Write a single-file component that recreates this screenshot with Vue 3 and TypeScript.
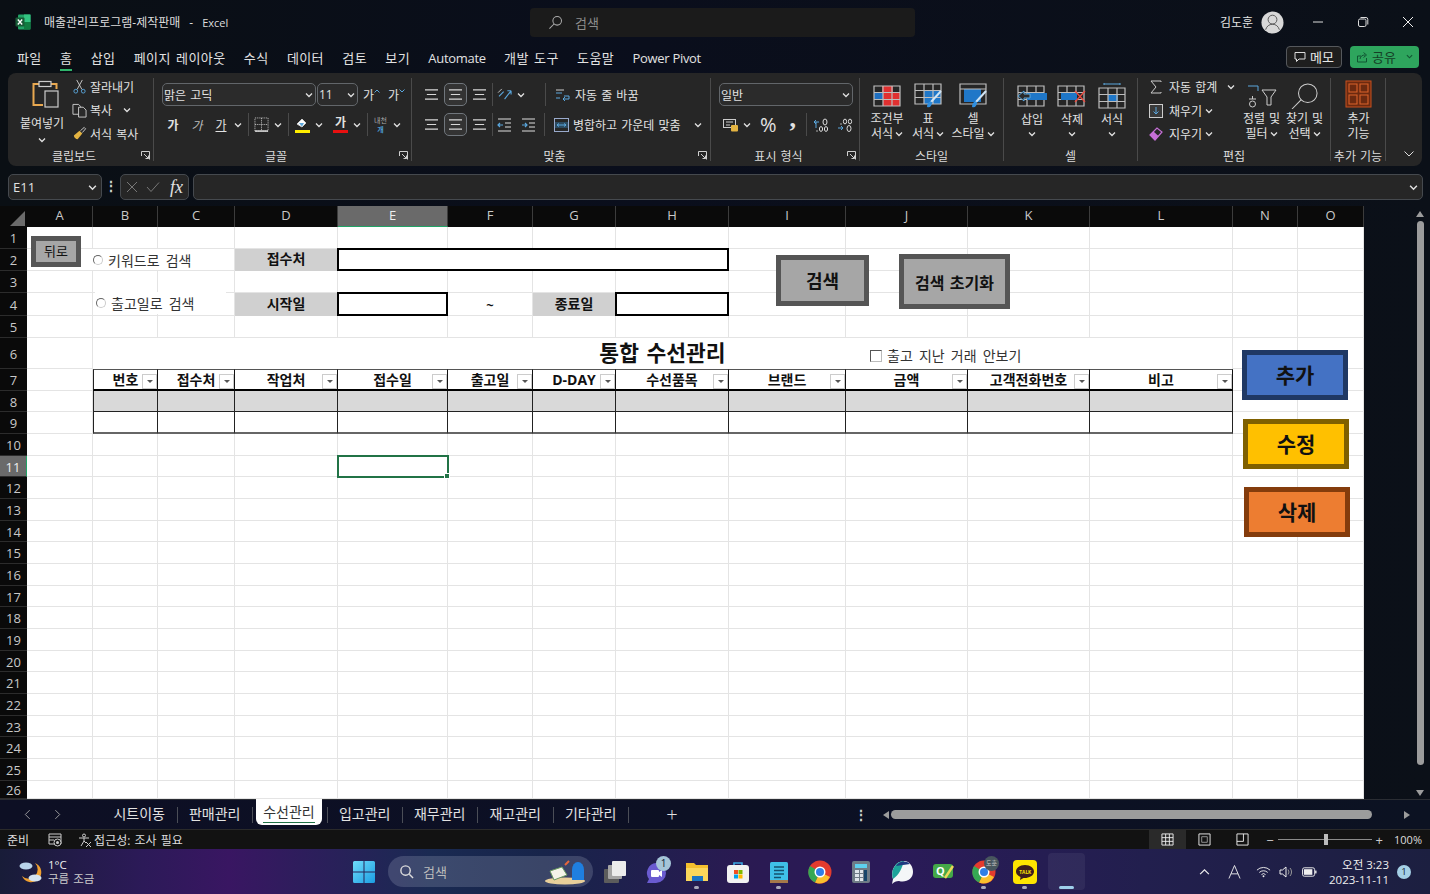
<script setup lang="ts">
import { computed } from 'vue'

interface Cell {
  key: string
  text: string
  cls: string[]
  span: number
  filter: boolean
}

// 열 머리글과 오른쪽 끝 좌표
const cols = ['A', 'B', 'C', 'D', 'E', 'F', 'G', 'H', 'I', 'J', 'K', 'L', 'N', 'O']
const colEdges = [27, 93, 158, 235, 338, 448, 533, 616, 729, 846, 968, 1090, 1233, 1298, 1364]
const rowEdges = [
  206, 227, 249, 271, 293, 316, 338, 369, 391, 412, 434, 456, 477, 499, 521, 542, 564, 586, 607, 629, 651, 672, 694,
  716, 737, 759, 781, 799
]

const gridStyle = computed(() => ({
  gridTemplateColumns: colEdges.map((e, i) => `${e - (i ? colEdges[i - 1] : 0)}px`).join(' '),
  gridTemplateRows: rowEdges.slice(1).map((e, i) => `${e - rowEdges[i]}px`).join(' ')
}))

const headers: Record<string, string> = {
  B: '번호',
  C: '접수처',
  D: '작업처',
  E: '접수일',
  F: '출고일',
  G: 'D-DAY',
  H: '수선품목',
  I: '브랜드',
  J: '금액',
  K: '고객전화번호',
  L: '비고'
}
const fixed: Record<string, { text: string; cls: string; span?: number }> = {
  D2: { text: '접수처', cls: 'label' },
  E2: { text: '', cls: 'box', span: 4 },
  D4: { text: '시작일', cls: 'label' },
  E4: { text: '', cls: 'box' },
  F4: { text: '~', cls: 'tilde' },
  G4: { text: '종료일', cls: 'label' },
  H4: { text: '', cls: 'box' },
  B6: { text: '통합 수선관리', cls: 'title', span: 11 },
  E11: { text: '', cls: 'cur' }
}

const cells = computed(() => {
  const out: Cell[] = []
  for (let r = 1; r <= 26; r++) {
    let skip = 0
    cols.forEach((c) => {
      if (skip > 0) {
        skip--
        return
      }
      const id = `${c}${r}`
      const f = fixed[id]
      const cls: string[] = []
      const inTable = c in headers
      if (inTable && r === 7) cls.push('th')
      if (inTable && r === 8) cls.push('gray')
      if (inTable && r === 9) cls.push('last')
      if (inTable && r >= 7 && r <= 9 && c === 'B') cls.push('first')
      if (f) cls.push(f.cls)
      const span = f?.span ?? 1
      skip = span - 1
      out.push({
        key: id,
        text: f?.text ?? (inTable && r === 7 ? headers[c] : ''),
        cls,
        span,
        filter: inTable && r === 7
      })
    })
  }
  return out
})

const rows = Array.from({ length: 26 }, (_, i) => i + 1)
const menus = ['파일', '홈', '삽입', '페이지 레이아웃', '수식', '데이터', '검토', '보기', 'Automate', '개발 도구', '도움말', 'Power Pivot']
const latinMenus = ['Automate', 'Power Pivot']
const tabs = ['시트이동', '판매관리', '수선관리', '입고관리', '재무관리', '재고관리', '기타관리']
</script>

<template>
  <div class="app">
    <svg width="0" height="0" class="defs">
      <symbol id="chev" viewBox="0 0 8 8"><path d="M1 2.5 4 5.5 7 2.5" fill="none" stroke="#e0e0e0" stroke-width="1.3" /></symbol>
      <symbol id="launch" viewBox="0 0 9 9">
        <path d="M.5 .5H8.5V8.5M.5 .5V5M3 3 7.5 7.5M7.5 4.5V7.5H4.5" fill="none" stroke="#cfcfcf" stroke-width="1" />
      </symbol>
      <symbol id="lines" viewBox="0 0 16 14">
        <path d="M1 2H15M3 7H13M1 12H15" fill="none" stroke="#d8d8d8" stroke-width="1.3" />
      </symbol>
      <symbol id="grid3" viewBox="0 0 28 22">
        <path d="M1 1H27V21H1ZM1 7.5H27M1 14.5H27M10 1V21M19 1V21" fill="none" stroke="#bdbdbd" stroke-width="1.2" />
      </symbol>
    </svg>

    <!-- 제목 표시줄 -->
    <header class="titlebar">
      <div class="title-left">
        <svg class="xl" viewBox="0 0 16 16" width="16" height="16">
          <rect x="3" y=".5" width="12.5" height="15" rx="1" fill="#21a366" />
          <rect x="9" y=".5" width="6.5" height="7.5" fill="#33c481" />
          <rect x="9" y="8" width="6.5" height="7.5" fill="#107c41" />
          <rect x=".5" y="3.5" width="9" height="9" rx="1" fill="#185c37" />
          <path d="M2.8 5.5 7.2 10.5M7.2 5.5 2.8 10.5" stroke="#fff" stroke-width="1.3" />
        </svg>
        <span>매출관리프로그램-제작판매</span>
        <span class="dash">-</span>
        <span class="excel">Excel</span>
      </div>
      <div class="search">
        <svg viewBox="0 0 16 16" width="15" height="15"><circle cx="9.8" cy="6.2" r="4.6" fill="none" stroke="#aaa" stroke-width="1.1" /><path d="M6.4 9.6 1.5 14.5" stroke="#aaa" stroke-width="1.1" /></svg>
        <span>검색</span>
      </div>
      <div class="title-right">
        <span class="user">김도훈</span>
        <svg class="avatar" viewBox="0 0 24 24" width="23" height="23">
          <circle cx="12" cy="12" r="11.5" fill="#d8d8d8" />
          <circle cx="12" cy="9" r="4.6" fill="none" stroke="#555" stroke-width="1" />
          <path d="M4.8 19.5C6 15.8 8.6 13.8 12 13.8S18 15.8 19.2 19.5" fill="none" stroke="#555" stroke-width="1" />
        </svg>
        <div class="winbtns">
          <svg viewBox="0 0 12 12" width="12" height="12"><path d="M1 6H11" stroke="#ddd" stroke-width="1" /></svg>
          <svg viewBox="0 0 12 12" width="12" height="12"><rect x="1.5" y="3" width="7.5" height="7.5" rx="1.5" fill="none" stroke="#ddd" /><path d="M3.5 1.5H9A1.8 1.8 0 0 1 10.8 3.3V8.5" fill="none" stroke="#ddd" /></svg>
          <svg viewBox="0 0 12 12" width="12" height="12"><path d="M1 1 11 11M11 1 1 11" stroke="#eee" stroke-width="1" /></svg>
        </div>
      </div>
    </header>

    <!-- 메뉴 탭 -->
    <nav class="menubar">
      <span v-for="m in menus" :key="m" class="menu" :class="{ on: m === '홈', latin: latinMenus.includes(m) }">{{ m }}</span>
      <div class="menu-right">
        <button class="memo">
          <svg viewBox="0 0 12 12" width="12" height="12"><path d="M1 1.5H11V8H5L2.5 10.5V8H1Z" fill="none" stroke="#ddd" /></svg>
          메모
        </button>
        <button class="share">
          <svg viewBox="0 0 12 12" width="12" height="12"><path d="M1.5 5V11H10.5V7M1.5 5 5 5M4 8C4.5 5 6.5 4 9 4M7.5 1.5 10.5 4 7.5 6.5" fill="none" stroke="#153" stroke-width="1" /></svg>
          <span>공유</span>
          <svg class="sc" viewBox="0 0 8 8" width="7" height="7"><path d="M1 2.5 4 5.5 7 2.5" fill="none" stroke="#153" stroke-width="1.3" /></svg>
        </button>
      </div>
    </nav>

    <!-- 리본 -->
    <section class="ribbon">
      <div class="group g-clip">
        <div class="body clip-body">
          <div class="paste">
            <svg class="paste-ic" viewBox="0 0 28 30" width="28" height="30">
              <path d="M7 4H1.5V25H11" fill="none" stroke="#e8a850" stroke-width="2" />
              <path d="M19 4H24.5V9" fill="none" stroke="#e8a850" stroke-width="2" />
              <rect x="7" y="1.5" width="12" height="5" fill="none" stroke="#ccc" stroke-width="1.2" />
              <rect x="13" y="11" width="13" height="16" fill="#2c2c2c" stroke="#ccc" stroke-width="1.2" />
            </svg>
            <span>붙여넣기</span>
            <svg class="ch" width="8" height="8"><use href="#chev" /></svg>
          </div>
          <div class="clip-list">
            <div class="small">
              <svg viewBox="0 0 16 16" width="15" height="15"><path d="M5 1 10.5 11M11 1 5.5 11" stroke="#ccc" fill="none" /><circle cx="4" cy="13" r="2" fill="none" stroke="#5aa6dc" /><circle cx="12" cy="13" r="2" fill="none" stroke="#5aa6dc" /></svg>
              <span>잘라내기</span>
            </div>
            <div class="small">
              <svg viewBox="0 0 16 16" width="15" height="15"><path d="M1 1.5H7L9 3.5V12H1Z" fill="none" stroke="#ccc" /><path d="M7 4.5H12L15 7.5V15H7Z" fill="#2a2a2a" stroke="#ccc" /></svg>
              <span>복사</span>
              <svg class="ch gap" width="8" height="8"><use href="#chev" /></svg>
            </div>
            <div class="small">
              <svg viewBox="0 0 16 16" width="15" height="15"><path d="M2 10 8 5 11 8 6 14C4 14 2 12 2 10Z" fill="#e3b341" /><path d="M9 5 13 1.5 14.5 3 11 7" fill="none" stroke="#ccc" /></svg>
              <span>서식 복사</span>
            </div>
          </div>
        </div>
        <div class="glabel shifted">클립보드</div>
        <svg class="launcher" width="9" height="9"><use href="#launch" /></svg>
      </div>

      <div class="group g-font">
        <div class="body">
          <div class="frow">
            <div class="select font-name"><span>맑은 고딕</span><svg width="8" height="8"><use href="#chev" /></svg></div>
            <div class="select font-size"><span>11</span><svg width="8" height="8"><use href="#chev" /></svg></div>
            <span class="grow">가<svg viewBox="0 0 6 4" width="6" height="4"><path d="M.5 3.5 3 1 5.5 3.5" fill="none" stroke="#5aa6dc" /></svg></span>
            <span class="grow">가<svg viewBox="0 0 6 4" width="6" height="4"><path d="M.5 .5 3 3 5.5 .5" fill="none" stroke="#5aa6dc" /></svg></span>
          </div>
          <div class="frow second">
            <b class="fb">가</b>
            <i class="fb it">가</i>
            <u class="fb">가</u>
            <svg class="ch c0" width="8" height="8"><use href="#chev" /></svg>
            <span class="sep"></span>
            <svg viewBox="0 0 16 16" width="15" height="15"><path d="M1 1H15V15H1ZM8 1V15M1 8H15" fill="none" stroke="#ccc" stroke-dasharray="1 1" /><path d="M1 15H15" stroke="#eee" stroke-width="1.4" /></svg>
            <svg class="ch" width="8" height="8"><use href="#chev" /></svg>
            <span class="sep"></span>
            <span class="colored">
              <svg viewBox="0 0 16 12" width="16" height="12"><path d="M3 7 8 2 12 6 8 10Z" fill="#fff" stroke="#ccc" /><path d="M5 6 10 6 8 9.5Z" fill="#5aa6dc" /></svg>
              <em class="yl"></em>
            </span>
            <svg class="ch" width="8" height="8"><use href="#chev" /></svg>
            <span class="colored txt">가<em class="rd"></em></span>
            <svg class="ch" width="8" height="8"><use href="#chev" /></svg>
            <span class="sep"></span>
            <span class="ruby">내천<br /><b>개</b></span>
            <svg class="ch" width="8" height="8"><use href="#chev" /></svg>
          </div>
        </div>
        <div class="glabel shifted">글꼴</div>
        <svg class="launcher" width="9" height="9"><use href="#launch" /></svg>
      </div>

      <div class="group g-align">
        <div class="body">
          <div class="frow">
            <span class="aic"><svg width="15" height="13"><use href="#lines" /></svg></span>
            <span class="aic sel"><svg width="15" height="13"><use href="#lines" /></svg></span>
            <span class="aic"><svg width="15" height="13"><use href="#lines" /></svg></span>
            <span class="sep"></span>
            <svg class="orient" viewBox="0 0 18 14" width="17" height="13"><path d="M2 9 7 4M8 12 15 3M15 3H11M15 3V7" fill="none" stroke="#5aa6dc" stroke-width="1.2" /><path d="M1 5 5 1" stroke="#ccc" /></svg>
            <svg class="ch" width="8" height="8"><use href="#chev" /></svg>
            <span class="sep s2"></span>
            <div class="wide">
              <svg viewBox="0 0 16 14" width="16" height="14"><path d="M1 5H7M1 10H5M9 8H14V11H8M10 9 8 11 10 13" fill="none" stroke="#5aa6dc" /><path d="M1 2H9" stroke="#ccc" /></svg>
              <span>자동 줄 바꿈</span>
            </div>
          </div>
          <div class="frow second">
            <span class="aic"><svg width="15" height="13"><use href="#lines" /></svg></span>
            <span class="aic sel"><svg width="15" height="13"><use href="#lines" /></svg></span>
            <span class="aic"><svg width="15" height="13"><use href="#lines" /></svg></span>
            <span class="sep"></span>
            <svg class="ind" viewBox="0 0 15 14" width="15" height="14"><path d="M1 1H14M8 5H14M8 9H14M1 13H14" stroke="#ddd" stroke-width="1.2" /><path d="M1 7H6M3 5 1 7 3 9" fill="none" stroke="#5aa6dc" stroke-width="1.2" /></svg>
            <svg class="ind ind2" viewBox="0 0 15 14" width="15" height="14"><path d="M1 1H14M8 5H14M8 9H14M1 13H14" stroke="#ddd" stroke-width="1.2" /><path d="M1 7H6M4 5 6 7 4 9" fill="none" stroke="#5aa6dc" stroke-width="1.2" /></svg>
            <span class="sep s3"></span>
            <div class="wide">
              <svg viewBox="0 0 15 14" width="15" height="14"><rect x=".5" y=".5" width="14" height="13" fill="none" stroke="#9ac" /><rect x="1" y="4" width="13" height="6" fill="#2b4a60" /><path d="M3 7H12M3 7 5 5.5M3 7 5 8.5M12 7 10 5.5M12 7 10 8.5" fill="none" stroke="#5aa6dc" /></svg>
              <span>병합하고 가운데 맞춤</span>
              <svg class="ch merge-ch" width="8" height="8"><use href="#chev" /></svg>
            </div>
          </div>
        </div>
        <div class="glabel shifted">맞춤</div>
        <svg class="launcher" width="9" height="9"><use href="#launch" /></svg>
      </div>

      <div class="group g-num">
        <div class="body">
          <div class="frow">
            <div class="select num-sel"><span>일반</span><svg width="8" height="8"><use href="#chev" /></svg></div>
          </div>
          <div class="frow second">
            <svg viewBox="0 0 16 14" width="16" height="14"><rect x=".5" y="1.5" width="12" height="8" fill="none" stroke="#ccc" /><path d="M3 4H10M3 7H7" stroke="#ccc" /><rect x="8" y="7" width="7" height="6.5" rx="1" fill="#e3b341" /></svg>
            <svg class="ch" width="8" height="8"><use href="#chev" /></svg>
            <span class="pct">%</span>
            <span class="comma">,</span>
            <span class="sep"></span>
            <svg viewBox="0 0 16 14" width="16" height="14"><path d="M1 4H6M3 2 1 4 3 6M3 4V10" fill="none" stroke="#5aa6dc" /><ellipse cx="12" cy="4" rx="2" ry="3" fill="none" stroke="#ddd" /><circle cx="4" cy="13" r=".7" fill="#ddd" /><ellipse cx="8" cy="11" rx="1.6" ry="2.4" fill="none" stroke="#ddd" /><ellipse cx="13" cy="11" rx="1.6" ry="2.4" fill="none" stroke="#ddd" /></svg>
            <svg class="last-ic" viewBox="0 0 16 14" width="16" height="14"><path d="M1 10H6M4 8 6 10 4 12" fill="none" stroke="#5aa6dc" /><circle cx="4" cy="6" r=".7" fill="#ddd" /><ellipse cx="8" cy="3.5" rx="1.6" ry="2.4" fill="none" stroke="#ddd" /><ellipse cx="13" cy="3.5" rx="1.6" ry="2.4" fill="none" stroke="#ddd" /><ellipse cx="12" cy="10.5" rx="2" ry="3" fill="none" stroke="#ddd" /></svg>
          </div>
        </div>
        <div class="glabel shifted">표시 형식</div>
        <svg class="launcher" width="9" height="9"><use href="#launch" /></svg>
      </div>

      <div class="group g-style">
        <div class="body bigs">
          <div class="big b1">
            <svg viewBox="0 0 28 22" width="28" height="22"><rect x="9" y="1" width="11" height="6" fill="#e03030" /><rect x="1" y="7" width="9" height="7" fill="#1f6fc0" /><rect x="10" y="7" width="17" height="7" fill="#e03030" /><rect x="10" y="14" width="17" height="7" fill="#e03030" /><use href="#grid3" width="28" height="22" /></svg>
            <span>조건부</span>
            <span>서식<svg class="ch" width="8" height="8"><use href="#chev" /></svg></span>
          </div>
          <div class="big b2">
            <svg viewBox="0 0 28 26" width="28" height="26"><rect x="10" y="8" width="17" height="13" fill="#1f77c8" /><use href="#grid3" width="28" height="22" /><path d="M27 8 17 19" stroke="#cfe4f5" stroke-width="2" /><path d="M13 24C13 20 15 18 18 19 18 23 16 25 13 24Z" fill="#2f8fe0" /></svg>
            <span>표</span>
            <span>서식<svg class="ch" width="8" height="8"><use href="#chev" /></svg></span>
          </div>
          <div class="big b3">
            <svg viewBox="0 0 28 26" width="28" height="26"><rect x="5" y="6" width="17" height="13" fill="#1f77c8" /><path d="M1 1H27V21H1ZM1 6H27" fill="none" stroke="#bdbdbd" stroke-width="1.2" /><path d="M27 8 17 19" stroke="#cfe4f5" stroke-width="2" /><path d="M13 24C13 20 15 18 18 19 18 23 16 25 13 24Z" fill="#2f8fe0" /></svg>
            <span>셀</span>
            <span>스타일<svg class="ch" width="8" height="8"><use href="#chev" /></svg></span>
          </div>
        </div>
        <div class="glabel">스타일</div>
      </div>

      <div class="group g-cells">
        <div class="body bigs">
          <div class="big cell-btn">
            <svg viewBox="0 0 30 22" width="30" height="22"><use href="#grid3" width="28" height="22" /><rect x="10" y="8" width="20" height="7" fill="#1f77c8" /><path d="M1 11 7 6V9H13V13H7V16Z" fill="#2a2a2a" stroke="#5aa6dc" /></svg>
            <span>삽입</span>
            <svg class="ch" width="8" height="8"><use href="#chev" /></svg>
          </div>
          <div class="big cell-btn">
            <svg viewBox="0 0 30 22" width="30" height="22"><use href="#grid3" width="28" height="22" /><rect x="4" y="8" width="16" height="7" fill="#1f77c8" /><path d="M18 6 28 17M28 6 18 17" stroke="#e84a3f" stroke-width="1.4" /></svg>
            <span>삭제</span>
            <svg class="ch" width="8" height="8"><use href="#chev" /></svg>
          </div>
          <div class="big cell-btn">
            <svg viewBox="0 0 28 26" width="28" height="26"><path d="M6 1H22M6 0V2M22 0V2" stroke="#5aa6dc" /><g transform="translate(0 4)"><rect x="10" y="7" width="10" height="7" fill="#1f77c8" /><use href="#grid3" width="28" height="22" /></g></svg>
            <span>서식</span>
            <svg class="ch" width="8" height="8"><use href="#chev" /></svg>
          </div>
        </div>
        <div class="glabel">셀</div>
      </div>

      <div class="group g-edit">
        <div class="body edit-body">
          <div class="edit-list">
            <div class="small">
              <svg viewBox="0 0 14 14" width="14" height="14"><path d="M12 2V1H2L7 7 2 13H12V12" fill="none" stroke="#ccc" /></svg>
              <span>자동 합계</span>
              <svg class="ch sum-ch" width="8" height="8"><use href="#chev" /></svg>
            </div>
            <div class="small">
              <svg viewBox="0 0 14 14" width="14" height="14"><rect x=".5" y=".5" width="13" height="13" fill="#3a3a3a" stroke="#ccc" /><path d="M7 3V10M4.5 7.5 7 10 9.5 7.5" fill="none" stroke="#5aa6dc" /></svg>
              <span>채우기</span>
              <svg class="ch" width="8" height="8"><use href="#chev" /></svg>
            </div>
            <div class="small">
              <svg viewBox="0 0 14 14" width="14" height="14"><path d="M1 8 8 1 13 5 6 13Z" fill="none" stroke="#c56fd6" stroke-width="1.2" /><path d="M1 8 4.5 4.5 9.5 9 6 13Z" fill="#c56fd6" /></svg>
              <span>지우기</span>
              <svg class="ch" width="8" height="8"><use href="#chev" /></svg>
            </div>
          </div>
          <div class="big sort">
            <svg viewBox="0 0 30 24" width="30" height="24"><path d="M1 2H11V7" fill="none" stroke="#5aa6dc" /><path d="M15 6H29L24 13V21H20V13Z" fill="none" stroke="#ccc" /><path d="M2 15H9M5.5 12V15M2.5 20A3 3 0 0 0 8.5 20 3 3 0 0 0 2.5 20" fill="none" stroke="#ccc" /></svg>
            <span>정렬 및</span>
            <span>필터<svg class="ch" width="8" height="8"><use href="#chev" /></svg></span>
          </div>
          <div class="big find">
            <svg viewBox="0 0 30 28" width="30" height="28"><circle cx="18" cy="11" r="10" fill="none" stroke="#ccc" stroke-width="1.1" /><path d="M11 18 1 28" stroke="#ccc" stroke-width="1.1" /></svg>
            <span>찾기 및</span>
            <span>선택<svg class="ch" width="8" height="8"><use href="#chev" /></svg></span>
          </div>
        </div>
        <div class="glabel">편집</div>
      </div>

      <div class="group g-add">
        <div class="body bigs">
          <div class="big add">
            <svg viewBox="0 0 27 28" width="27" height="28"><rect x="1" y="1" width="25" height="26" fill="#6c2a10" stroke="#c8501e" /><path d="M4 4H12V12H4ZM15 4H23V12H15ZM4 15H12V24H4ZM15 15H23V24H15Z" fill="none" stroke="#d9622b" stroke-width="1.1" /></svg>
            <span>추가</span>
            <span>기능</span>
          </div>
        </div>
        <div class="glabel">추가 기능</div>
      </div>

      <svg class="collapse" viewBox="0 0 10 6" width="10" height="6"><path d="M.5 .5 5 5 9.5 .5" fill="none" stroke="#ddd" /></svg>
    </section>

    <!-- 수식 입력줄 -->
    <section class="formula">
      <div class="fbox namebox"><span>E11</span><svg width="9" height="9"><use href="#chev" /></svg></div>
      <span class="vdots">⋮</span>
      <div class="fbox fxbox">
        <svg viewBox="0 0 12 12" width="12" height="12"><path d="M1 1 11 11M11 1 1 11" stroke="#777" /></svg>
        <svg viewBox="0 0 14 12" width="14" height="12"><path d="M1 6 5 10.5 13 1.5" fill="none" stroke="#777" /></svg>
        <i class="fx">fx</i>
      </div>
      <div class="fbox input"><svg width="9" height="9"><use href="#chev" /></svg></div>
    </section>

    <!-- 시트 -->
    <main class="main">
      <div class="sheet">
        <div class="grid" :style="gridStyle">
          <div class="corner"><i></i></div>
          <div v-for="c in cols" :key="c" class="ch-cell" :class="{ sel: c === 'E' }">{{ c }}</div>
          <template v-for="r in rows" :key="r">
            <div class="rh" :class="{ sel: r === 11 }" :style="{ gridRow: r + 1, gridColumn: 1 }">{{ r }}</div>
          </template>
          <div
            v-for="cell in cells"
            :key="cell.key"
            class="cell"
            :class="cell.cls"
            :style="{
              gridRow: Number(cell.key.slice(1)) + 1,
              gridColumn: `${cols.indexOf(cell.key[0]) + 2} / span ${cell.span}`
            }"
          >
            {{ cell.text }}
            <span v-if="cell.filter" class="filter"><i></i></span>
          </div>
        </div>

        <!-- 시트 위 도형과 컨트롤 -->
        <div class="shape back">뒤로</div>
        <div class="shape find-btn">검색</div>
        <div class="shape reset-btn">검색 초기화</div>
        <div class="shape add-btn">추가</div>
        <div class="shape edit-btn">수정</div>
        <div class="shape del-btn">삭제</div>
        <label class="ctl radio r1"><i></i>키워드로 검색</label>
        <label class="ctl radio r2"><i></i>출고일로 검색</label>
        <label class="ctl check"><i></i>출고 지난 거래 안보기</label>
      </div>
      <div class="vscroll">
        <i class="tri-up"></i>
        <div class="vthumb"></div>
        <i class="tri-down"></i>
      </div>
    </main>

    <!-- 시트 탭 -->
    <section class="tabbar">
      <div class="tabnav">
        <svg viewBox="0 0 8 12" width="7" height="11"><path d="M6.5 1 1.5 6 6.5 11" fill="none" stroke="#aaa" /></svg>
        <svg viewBox="0 0 8 12" width="7" height="11"><path d="M1.5 1 6.5 6 1.5 11" fill="none" stroke="#aaa" /></svg>
      </div>
      <div v-for="t in tabs" :key="t" class="tab" :class="{ on: t === '수선관리' }">
        <span>{{ t }}</span>
      </div>
      <span class="plus">+</span>
      <span class="hdots">⋮</span>
      <div class="hscroll">
        <i class="tri-left"></i>
        <div class="hthumb"></div>
        <i class="tri-right"></i>
      </div>
    </section>

    <!-- 상태 표시줄 -->
    <footer class="status">
      <span class="ready">준비</span>
      <svg class="macro" viewBox="0 0 14 14" width="14" height="14"><path d="M1 1H13V11H1ZM1 4H13M1 7H6" fill="none" stroke="#ccc" /><circle cx="9.5" cy="9.5" r="3.5" fill="#141414" stroke="#ccc" /><circle cx="9.5" cy="9.5" r="1.5" fill="#ccc" /></svg>
      <svg class="a11y" viewBox="0 0 14 14" width="14" height="14"><circle cx="6" cy="2.5" r="1.5" fill="none" stroke="#ccc" /><path d="M1 5H11M6 5V8L3 13M6 8 8 10" fill="none" stroke="#ccc" /><path d="M8 9 13 14M13 9 8 14" stroke="#ccc" /></svg>
      <span class="a11y-t">접근성: 조사 필요</span>
      <div class="views">
        <span class="view on"><svg viewBox="0 0 14 14" width="13" height="13"><path d="M1 1H13V13H1ZM1 5H13M1 9H13M5 1V13M9 1V13" fill="none" stroke="#eee" /></svg></span>
        <span class="view"><svg viewBox="0 0 14 14" width="13" height="13"><path d="M1 1H13V13H1Z" fill="none" stroke="#eee" /><path d="M4 4H10V10H4Z" fill="none" stroke="#999" /></svg></span>
        <span class="view"><svg viewBox="0 0 14 14" width="13" height="13"><path d="M1 1H13V13H1ZM1 9H8V1" fill="none" stroke="#eee" /></svg></span>
      </div>
      <div class="zoom">
        <span>−</span>
        <div class="track"><i></i></div>
        <span>+</span>
      </div>
      <span class="pct100">100%</span>
    </footer>

    <!-- 작업 표시줄 -->
    <footer class="taskbar">
      <div class="weather">
        <svg viewBox="0 0 26 24" width="26" height="24">
          <path d="M17 3A10 10 0 1 1 4 16 8 8 0 0 0 17 3Z" fill="#f0a030" />
          <ellipse cx="8" cy="6" rx="6.5" ry="3.5" fill="#b9d4ea" />
          <ellipse cx="17" cy="18" rx="6.5" ry="3.5" fill="#d5e4f0" />
        </svg>
        <div><div>1°C</div><div class="wd">구름 조금</div></div>
      </div>
      <svg class="winlogo" viewBox="0 0 22 22" width="22" height="22">
        <defs><linearGradient id="wg" x1="0" y1="0" x2="1" y2="1"><stop offset="0" stop-color="#6fdcfa" /><stop offset="1" stop-color="#1b9de2" /></linearGradient></defs>
        <path d="M0 1.5A1.5 1.5 0 0 1 1.5 0H10.5V10.5H0ZM11.5 0H20.5A1.5 1.5 0 0 1 22 1.5V10.5H11.5ZM0 11.5H10.5V22H1.5A1.5 1.5 0 0 1 0 20.5ZM11.5 11.5H22V20.5A1.5 1.5 0 0 1 20.5 22H11.5Z" fill="url(#wg)" />
      </svg>
      <div class="pill">
        <svg viewBox="0 0 16 16" width="15" height="15"><circle cx="7" cy="7" r="5" fill="none" stroke="#ddd" stroke-width="1.5" /><path d="M11 11 15 15" stroke="#ddd" stroke-width="1.5" /></svg>
        <span>검색</span>
        <svg class="deco" viewBox="0 0 42 26" width="42" height="26">
          <ellipse cx="20" cy="22" rx="20" ry="3.5" fill="#e8cf9a" />
          <path d="M5 12 17 8 22 16 9 21Z" fill="#f4f4e8" stroke="#6a9a60" />
          <path d="M20 6 24 2" stroke="#e8663a" stroke-width="2" />
          <path d="M27 21V11A6 8 0 0 1 39 11V21Z" fill="#1f7fe0" />
        </svg>
      </div>
      <div class="tray-apps">
        <span class="app-i">
          <svg viewBox="0 0 24 24" width="24" height="24"><rect x="1" y="9" width="15" height="14" rx="1" fill="#5c5c5c" /><rect x="5" y="5" width="14" height="14" rx="1" fill="#a5a5a5" /><rect x="9" y="1" width="14" height="15" rx="1" fill="#ececec" /></svg>
        </span>
        <span class="app-i">
          <svg viewBox="0 0 24 24" width="24" height="24"><path d="M12 3A10 10 0 0 1 12 23H3L5 19A10 10 0 0 1 12 3Z" fill="#6a5bd0" /><rect x="7" y="10" width="8" height="7" rx="1" fill="#fff" /><path d="M15 12 18 10V17L15 15Z" fill="#fff" /></svg>
          <em class="badge">1</em>
        </span>
        <span class="app-i run">
          <svg viewBox="0 0 24 24" width="24" height="24"><path d="M1 3H9L11 5H23V21H1Z" fill="#f5c02e" /><rect x="1" y="8" width="22" height="13" fill="#fbd75b" /><rect x="7" y="16" width="11" height="5" fill="#1b76c4" /></svg>
        </span>
        <span class="app-i">
          <svg viewBox="0 0 24 24" width="24" height="24"><path d="M8 6V3H16V6" fill="none" stroke="#3ba7e0" stroke-width="1.6" /><rect x="1" y="5" width="22" height="18" rx="3" fill="#f2f2f2" /><rect x="8" y="10" width="4" height="4" fill="#f25022" /><rect x="12.5" y="10" width="4" height="4" fill="#7fba00" /><rect x="8" y="14.5" width="4" height="4" fill="#00a4ef" /><rect x="12.5" y="14.5" width="4" height="4" fill="#ffb900" /></svg>
        </span>
        <span class="app-i run">
          <svg viewBox="0 0 24 24" width="24" height="24"><rect x="3" y="2" width="18" height="21" rx="1.5" fill="#3fc0e8" /><rect x="3" y="20" width="18" height="3" fill="#a5784a" /><path d="M7 7H17M7 10.5H17M7 14H17M7 17.5H14" stroke="#14506e" stroke-width="1.3" /></svg>
        </span>
        <span class="app-i">
          <svg viewBox="0 0 24 24" width="24" height="24"><circle cx="12" cy="12" r="11.5" fill="#e33b2e" /><path d="M12 12 22 17A11.5 11.5 0 0 1 7 22.5Z" fill="#fbc02d" /><path d="M12 12 7 22.5A11.5 11.5 0 0 1 2 6Z" fill="#35a853" /><circle cx="12" cy="12" r="5.5" fill="#fff" /><circle cx="12" cy="12" r="4" fill="#2f7fe8" /></svg>
        </span>
        <span class="app-i">
          <svg viewBox="0 0 24 24" width="24" height="24"><rect x="3" y="1" width="18" height="22" rx="2" fill="#6f7b86" /><rect x="6" y="4" width="12" height="4" fill="#5ed0ee" /><path d="M6 10H10V13H6ZM11 10H14V13H11ZM6 14H10V17H6ZM11 14H14V17H11ZM6 18H10V21H6ZM11 18H14V21H11Z" fill="#dfe5ea" /><rect x="15" y="10" width="3" height="11" fill="#17456a" /></svg>
        </span>
        <span class="app-i">
          <svg viewBox="0 0 24 24" width="24" height="24"><path d="M3 19C0 10 6 1 14 1 20 1 23 7 23 12 23 19 16 23 9 21 6 21 4 22 2 24Z" fill="#f4f6f8" /><path d="M3 19C0 10 6 1 14 1 12 8 9 15 3 19Z" fill="#1ca39a" /><path d="M6 6C9 1 16 0 20 4 16 5 10 5 6 6Z" fill="#1f3a80" /></svg>
        </span>
        <span class="app-i">
          <svg viewBox="0 0 24 24" width="24" height="24"><rect x="2" y="4" width="20" height="14" rx="3" fill="#44a848" /><text x="5" y="15" class="q">Q</text><path d="M14 18 22 6" stroke="#ecd95a" stroke-width="2.4" /></svg>
        </span>
        <span class="app-i run">
          <svg viewBox="0 0 24 24" width="24" height="24"><circle cx="12" cy="12" r="11.5" fill="#e33b2e" /><path d="M12 12 22 17A11.5 11.5 0 0 1 7 22.5Z" fill="#fbc02d" /><path d="M12 12 7 22.5A11.5 11.5 0 0 1 2 6Z" fill="#35a853" /><circle cx="12" cy="12" r="5.5" fill="#fff" /><circle cx="12" cy="12" r="4" fill="#2f7fe8" /></svg>
          <em class="badge prof">도훈</em>
        </span>
        <span class="app-i run">
          <svg viewBox="0 0 24 24" width="24" height="24"><rect width="24" height="24" rx="4" fill="#fee500" /><path d="M12 5C6.5 5 3 8 3 11.5 3 14 5 16 7.5 17L7 20 10.5 18C15 18.5 21 16 21 11.5 21 8 17.5 5 12 5Z" fill="#3c1e1e" /><text x="6.3" y="13.5" class="talk">TALK</text></svg>
        </span>
        <span class="app-i blank"></span>
      </div>
      <div class="tray">
        <svg viewBox="0 0 12 8" width="11" height="7"><path d="M1 7 6 2 11 7" fill="none" stroke="#eee" stroke-width="1.4" /></svg>
        <svg class="ime" viewBox="0 0 14 16" width="13" height="16"><path d="M1 15 7 1 13 15M3.3 10H10.7" fill="none" stroke="#eee" /></svg>
        <svg class="wifi" viewBox="0 0 16 12" width="15" height="12"><path d="M1 4A10 10 0 0 1 15 4M3.5 6.5A6.5 6.5 0 0 1 12.5 6.5M5.8 8.8A3 3 0 0 1 10.2 8.8" fill="none" stroke="#eee" /><circle cx="8" cy="10.5" r="1" fill="#eee" /></svg>
        <svg class="spk" viewBox="0 0 14 12" width="14" height="12"><path d="M1 4H3.5L7 1V11L3.5 8H1Z" fill="none" stroke="#eee" /><path d="M9 3.5A4 4 0 0 1 9 8.5M11 2A6 6 0 0 1 11 10" fill="none" stroke="#999" /></svg>
        <svg class="bat" viewBox="0 0 16 10" width="15" height="10"><rect x=".5" y=".5" width="13" height="9" rx="2" fill="none" stroke="#eee" /><rect x="2" y="2" width="9" height="6" fill="#eee" /><rect x="14" y="3.5" width="1.5" height="3" fill="#eee" /></svg>
        <div class="clock"><div>오전 3:23</div><div>2023-11-11</div></div>
        <em class="notif">1</em>
      </div>
    </footer>
  </div>
</template>

<style>
html,
body {
  margin: 0;
  background: #0a0e15;
}
</style>

<style scoped>
.app {
  width: 1430px;
  height: 894px;
  display: flex;
  flex-direction: column;
  overflow: hidden;
  background: linear-gradient(90deg, #0a0f14 0%, #0a0e1c 45%, #0b1018 100%);
  color: #e2e2e2;
  font-family: 'Open Sans', 'Noto Sans CJK KR', sans-serif;
  font-size: 12px;
  word-spacing: 1px;
}
.defs {
  position: absolute;
}
.titlebar {
  height: 44px;
  display: flex;
  align-items: center;
  flex: none;
}
.title-left {
  width: 530px;
  display: flex;
  align-items: center;
  font-size: 12px;
  color: #ddd;
  padding-left: 15px;
  box-sizing: border-box;
}
.xl {
  margin-right: 13px;
}
.dash {
  margin: 0 9px;
}
.excel {
  font-size: 11px;
}
.search {
  width: 385px;
  height: 29px;
  border-radius: 4px;
  background: #1b1b1b;
  display: flex;
  align-items: center;
  gap: 12px;
  padding-left: 18px;
  box-sizing: border-box;
  color: #8d8d8d;
  font-size: 13px;
}
.title-right {
  flex: 1;
  display: flex;
  align-items: center;
  justify-content: flex-end;
}
.user {
  margin-right: 8px;
  font-size: 12px;
}
.avatar {
  margin-right: 28px;
}
.winbtns {
  display: flex;
  gap: 33px;
  padding-right: 16px;
}
.menubar {
  height: 29px;
  flex: none;
  display: flex;
  align-items: center;
  padding-left: 17px;
  gap: 18.3px;
  font-size: 13px;
  letter-spacing: 0.4px;
  word-spacing: 1.5px;
}
.menu {
  position: relative;
  line-height: 29px;
}
.menu.latin {
  letter-spacing: -0.3px;
  word-spacing: 0;
}
.menu.on::after {
  content: '';
  position: absolute;
  left: 0;
  right: 0;
  bottom: 2px;
  height: 2px;
  background: #2fb56a;
}
.menu-right {
  margin-left: auto;
  display: flex;
  gap: 8px;
  padding-right: 11px;
  margin-top: -4px;
}
.memo,
.share {
  height: 22px;
  border-radius: 4px;
  font: inherit;
  display: flex;
  align-items: center;
  justify-content: center;
  gap: 4px;
  padding: 0;
  font-size: 13px;
}
.memo {
  width: 56px;
  background: #1e1e1e;
  border: 1px solid #55585c;
  color: #e8e8e8;
}
.share {
  width: 69px;
  background: #2ea55d;
  border: 0;
  color: #153f26;
}
.sc {
  margin-left: 6px;
}
.ribbon {
  height: 93px;
  margin: 0 8px;
  flex: none;
  display: flex;
  position: relative;
  background: #262626;
  border-radius: 8px;
  font-size: 12px;
}
.group {
  position: relative;
  flex: none;
  height: 83px;
  margin-top: 5px;
  box-sizing: border-box;
  border-right: 1px solid #4a4a4a;
}
.g-clip {
  width: 146px;
}
.g-font {
  width: 258px;
}
.g-align {
  width: 299px;
}
.g-num {
  width: 149px;
}
.g-style {
  width: 144px;
}
.g-cells {
  width: 134px;
}
.g-edit {
  width: 193px;
}
.g-add {
  width: 55px;
}
.body {
  height: 69px;
  box-sizing: border-box;
  padding-top: 5px;
}
.glabel {
  height: 20px;
  line-height: 20px;
  text-align: center;
  white-space: nowrap;
  color: #dcdcdc;
}
.glabel.shifted {
  padding-right: 13px;
}
.launcher {
  position: absolute;
  right: 3px;
  bottom: 1px;
}
.ch {
  flex: none;
}
.clip-body {
  display: flex;
  padding-top: 0;
}
.paste {
  width: 48px;
  margin-left: 10px;
  display: flex;
  flex-direction: column;
  align-items: center;
  padding-top: 2px;
  white-space: nowrap;
}
.paste-ic {
  margin-left: 7px;
}
.paste span {
  margin-top: 5px;
  line-height: 18px;
}
.paste .ch {
  margin-top: 3px;
}
.clip-list {
  margin-left: 6px;
  margin-top: -3px;
}
.small {
  height: 23.5px;
  display: flex;
  align-items: center;
  gap: 3px;
  white-space: nowrap;
}
.gap {
  margin-left: 8px;
}
.frow {
  display: flex;
  align-items: center;
  height: 23px;
  padding-left: 8px;
}
.frow.second {
  margin-top: 7px;
}
.select {
  box-sizing: border-box;
  height: 23px;
  border: 1px solid #62666a;
  border-radius: 5px;
  display: flex;
  align-items: center;
  justify-content: space-between;
  padding: 0 2px 0 1px;
  background: #2b2b2b;
}
.font-name {
  width: 154px;
}
.font-size {
  width: 41px;
  margin-left: 1px;
}
.grow {
  display: flex;
  align-items: flex-start;
  width: 25px;
  padding-left: 5px;
  box-sizing: border-box;
  font-size: 12px;
}
.grow svg {
  margin: 3px 0 0 0;
}
.fb {
  width: 24px;
  text-align: center;
  font-size: 12px;
  flex: none;
}
.g-font .second {
  padding-left: 7px;
}
.it {
  color: #bbb;
}
.sep {
  width: 1px;
  height: 23px;
  background: #4a4a4a;
  margin: 0 5px 0 6px;
  flex: none;
}
.colored {
  display: flex;
  flex-direction: column;
  align-items: center;
  width: 16px;
  flex: none;
}
.colored em {
  display: block;
  width: 15px;
  height: 3px;
  margin-top: 1px;
}
.colored.txt {
  width: 15px;
  margin-left: 10px;
  font-weight: 700;
  line-height: 13px;
}
.yl {
  background: #ffee00;
}
.rd {
  background: #e81010;
}
.ruby {
  width: 15px;
  flex: none;
  font-size: 7px;
  line-height: 9px;
  text-align: center;
  color: #aaa;
  word-spacing: 0;
  white-space: nowrap;
}
.ruby b {
  color: #4d9bd4;
}
.g-font .second .ch {
  margin-left: 5px;
}
.g-font .second .c0 {
  margin-left: 1px;
}
.aic {
  width: 23px;
  height: 23px;
  box-sizing: border-box;
  display: flex;
  align-items: center;
  justify-content: center;
  margin-right: 1px;
  flex: none;
}
.aic.sel {
  border: 1px solid #70767c;
  border-radius: 5px;
  background: #333;
}
.g-align .sep {
  margin: 0 4px 0 0;
}
.orient + .ch {
  margin-left: 3px;
}
.g-align .s2 {
  margin: 0 9px 0 20px;
}
.g-align .s3 {
  margin: 0 9px 0 8px;
}
.ind {
  margin: 0;
  flex: none;
}
.ind2 {
  margin-left: 9px;
}
.wide {
  display: flex;
  align-items: center;
  gap: 4px;
  white-space: nowrap;
}
.merge-ch {
  margin-left: 9px;
}
.num-sel {
  width: 134px;
}
.g-num .second {
  padding-left: 12px;
  gap: 4px;
}
.pct {
  font-size: 20px;
  line-height: 22px;
  margin-left: 5px;
}
.comma {
  font-size: 26px;
  font-family: 'Liberation Serif', serif;
  font-weight: 700;
  line-height: 10px;
  margin: -12px 0 0 9px;
}
.g-num .sep {
  margin: 0 2px 0 6px;
}
.last-ic {
  margin-left: 4px;
}
.bigs {
  display: flex;
}
.big {
  display: flex;
  flex-direction: column;
  align-items: center;
  line-height: 15px;
  white-space: nowrap;
  flex: none;
}
.big > svg:first-child {
  height: 26px;
  margin-bottom: 2px;
}
.big span {
  display: flex;
  align-items: center;
  gap: 2px;
}
.big .ch {
  margin-top: 1px;
}
.g-style .big {
  width: 40px;
}
.b1 {
  margin-left: 7px;
}
.b2 {
  margin-left: 1px;
}
.b3 {
  margin-left: 5px;
}
.g-cells .big {
  width: 40px;
}
.g-cells .bigs {
  padding-left: 8px;
}
.cell-btn span {
  line-height: 18px;
}
.edit-body {
  display: flex;
}
.edit-list {
  width: 108px;
  margin-top: -8px;
  padding-left: 11px;
  box-sizing: border-box;
}
.edit-list .small {
  height: 23.8px;
  gap: 6px;
}
.edit-list .ch {
  margin-left: -3px;
}
.edit-list .sum-ch {
  margin-left: 4px;
}
.sort,
.find {
  width: 43px;
}
.sort {
  margin-left: -6px;
}
.add {
  width: 55px;
  margin-top: -3px;
}
.add > svg:first-child {
  height: 28px;
  margin-bottom: 3px;
}
.collapse {
  position: absolute;
  right: 8px;
  top: 78px;
}
.formula {
  height: 26px;
  margin: 8px 7px 0 8px;
  flex: none;
  display: flex;
  align-items: stretch;
}
.fbox {
  background: #262626;
  border: 1px solid #45494e;
  border-radius: 5px;
  box-sizing: border-box;
  display: flex;
  align-items: center;
}
.namebox {
  width: 94px;
  padding: 0 4px;
  justify-content: space-between;
  font-size: 13px;
}
.vdots {
  width: 18px;
  text-align: center;
  line-height: 24px;
  font-size: 14px;
  font-weight: 700;
  color: #ccc;
}
.fxbox {
  width: 69px;
  gap: 8px;
  padding-left: 5px;
}
.fx {
  font-family: 'Liberation Serif', serif;
  font-size: 18px;
  margin-left: 2px;
}
.input {
  flex: 1;
  margin-left: 4px;
  justify-content: flex-end;
  padding-right: 4px;
}
.main {
  margin-top: 6px;
  height: 593px;
  flex: none;
  display: flex;
}
.sheet {
  position: relative;
  width: 1364px;
  height: 593px;
  overflow: hidden;
  background: #fff;
  flex: none;
}
.grid {
  display: grid;
}
.corner,
.ch-cell,
.rh {
  background: #0a0a0a;
  color: #c9c9c9;
  font-size: 13px;
  display: flex;
  align-items: center;
  justify-content: center;
  box-sizing: border-box;
}
.corner {
  grid-row: 1;
  grid-column: 1;
  position: relative;
}
.corner i {
  position: absolute;
  right: 2px;
  bottom: 1px;
  border-style: solid;
  border-width: 0 0 15px 15px;
  border-color: transparent transparent #6b6b6b transparent;
}
.ch-cell {
  grid-row: 1;
  border-right: 1px solid #3c3c3c;
  padding-bottom: 3px;
}
.ch-cell.sel {
  background: #6a6a6a;
  border-bottom: 1px solid #21a366;
  color: #eee;
}
.rh {
  border-bottom: 1px solid #2c2c2c;
  padding-top: 1px;
}
.rh.sel {
  background: #6a6a6a;
  border-right: 1px solid #21a366;
  color: #eee;
}
.cell {
  position: relative;
  box-sizing: border-box;
  min-width: 0;
  border-right: 1px solid #e4e4e4;
  border-bottom: 1px solid #e4e4e4;
  display: flex;
  align-items: center;
  justify-content: center;
  color: #111;
  font-size: 14px;
  font-weight: 700;
  white-space: nowrap;
}
.label {
  background: #d0d0d0;
  border-color: #d0d0d0;
  padding-bottom: 3px;
}
.box {
  border: 2px solid #000;
  margin: -1px 0 0 -1px;
  background: #fff;
  z-index: 1;
}
.tilde {
  font-size: 13px;
  padding-top: 2px;
}
.title {
  font-size: 21.5px;
  word-spacing: 2px;
  border-right: 1px solid #e4e4e4;
  border-bottom: 0;
  padding-bottom: 5px;
}
.th {
  border-top: 1px solid #555;
  border-right: 1px solid #111;
  border-bottom: 2px solid #000;
  padding-bottom: 1px;
}
.gray {
  background: #d9d9d9;
  border-right: 1px solid #222;
  border-bottom: 1px solid #222;
}
.last {
  border-right: 1px solid #222;
  border-bottom: 2px solid #666;
}
.first {
  border-left: 1px solid #222;
}
.filter {
  position: absolute;
  right: 0;
  bottom: 0;
  width: 15px;
  height: 15px;
  box-sizing: border-box;
  background: #fff;
  border: 1px solid #ccc;
  display: flex;
  align-items: center;
  justify-content: center;
}
.filter i {
  border-style: solid;
  border-width: 3px 3px 0;
  border-color: #555 transparent transparent;
}
.cur {
  outline: 2px solid #217346;
  outline-offset: -1px;
  z-index: 2;
}
.cur::after {
  content: '';
  position: absolute;
  right: -3px;
  bottom: -3px;
  width: 4px;
  height: 4px;
  background: #217346;
  border: 1px solid #fff;
}
.shape {
  position: absolute;
  box-sizing: border-box;
  display: flex;
  align-items: center;
  justify-content: center;
  color: #111;
  font-weight: 700;
  border-style: solid;
  border-width: 5px;
  z-index: 3;
}
.back {
  left: 31px;
  top: 30px;
  width: 50px;
  height: 31px;
  background: #a6a6a6;
  border-color: #555;
  font-size: 13px;
  font-weight: 400;
  padding-bottom: 2px;
}
.find-btn {
  left: 776px;
  top: 49px;
  width: 93px;
  height: 51px;
  background: #a6a6a6;
  border-color: #555;
  font-size: 18px;
  padding-bottom: 2px;
}
.reset-btn {
  left: 899px;
  top: 48px;
  width: 111px;
  height: 55px;
  background: #a6a6a6;
  border-color: #555;
  font-size: 16px;
}
.add-btn {
  left: 1242px;
  top: 144px;
  width: 106px;
  height: 50px;
  background: #4472c4;
  border-color: #1f3864;
  font-size: 21px;
  padding-bottom: 2px;
}
.edit-btn {
  left: 1243px;
  top: 213px;
  width: 106px;
  height: 50px;
  background: #ffc000;
  border-color: #7f6000;
  font-size: 21px;
  padding-bottom: 3px;
}
.del-btn {
  left: 1244px;
  top: 281px;
  width: 106px;
  height: 50px;
  background: #ed7d31;
  border-color: #843c0c;
  font-size: 21px;
  padding-bottom: 2px;
}
.ctl {
  position: absolute;
  display: flex;
  align-items: center;
  background: #fff;
  color: #333;
  font-size: 14px;
  word-spacing: 2.5px;
  white-space: nowrap;
  z-index: 3;
}
.radio i {
  width: 8px;
  height: 8px;
  border: 1px solid #666;
  border-right-color: #ccc;
  border-bottom-color: #ccc;
  border-radius: 50%;
  margin-right: 5px;
}
.r1 {
  left: 92px;
  top: 43px;
  height: 21px;
  width: 130px;
  padding-left: 1px;
}
.r2 {
  left: 95px;
  top: 86px;
  height: 22px;
  width: 130px;
  padding-left: 1px;
}
.check {
  left: 870px;
  top: 141px;
  height: 18px;
  font-size: 14px;
  background: transparent;
  align-items: flex-end;
}
.check i {
  width: 10px;
  height: 10px;
  border: 1px solid #555;
  border-right-color: #bbb;
  border-bottom-color: #bbb;
  margin: 0 5px 3px 0;
}
.vscroll {
  flex: 1;
  display: flex;
  flex-direction: column;
  align-items: center;
  padding: 5px 4px 0 50px;
  box-sizing: border-box;
}
.tri-up {
  border-style: solid;
  border-width: 0 4.5px 6px;
  border-color: transparent transparent #9c9c9c;
}
.vthumb {
  width: 7px;
  height: 544px;
  margin: 4px 0 auto;
  background: #9c9c9c;
  border-radius: 4px;
}
.tri-down {
  margin-bottom: 3px;
  border-style: solid;
  border-width: 6px 4.5px 0;
  border-color: #9c9c9c transparent transparent;
}
.tabbar {
  height: 30px;
  flex: none;
  display: flex;
  align-items: center;
  background: linear-gradient(90deg, #0d0f24, #0c1024 50%, #0c1222);
  border-top: 1px solid #2a2d33;
  box-sizing: border-box;
  position: relative;
  font-size: 14px;
}
.tabnav {
  width: 102px;
  box-sizing: border-box;
  display: flex;
  gap: 23px;
  padding-left: 24px;
  flex: none;
}
.tab {
  width: 75.5px;
  flex: none;
  display: flex;
  justify-content: center;
  align-items: center;
  height: 16px;
  border-right: 1px solid #4b4e57;
  box-sizing: border-box;
  color: #e2e2e2;
}
.tab span {
  margin-top: -3px;
}
.tab.on {
  width: 66px;
  height: 26px;
  align-self: flex-start;
  margin: -1px 5px 0 3px;
  border: 0;
  background: #fff;
  color: #333;
  border-radius: 0 0 6px 6px;
}
.tab.on span {
  margin-top: 0;
  border-bottom: 1px solid #217346;
  line-height: 19px;
  padding: 0 0 1px;
}
.tab.on + .tab {
  border-left: 1px solid #4b4e57;
}
.plus {
  margin-left: 35px;
  font-size: 20px;
  font-weight: 300;
  width: 16px;
  text-align: center;
  line-height: 20px;
}
.hdots {
  margin-left: 174px;
  width: 8px;
  text-align: center;
  font-weight: 700;
  color: #ccc;
}
.hscroll {
  margin-left: 21px;
  width: 527px;
  display: flex;
  align-items: center;
}
.tri-left {
  border-style: solid;
  border-width: 4.5px 6px 4.5px 0;
  border-color: transparent #9c9c9c transparent transparent;
}
.hthumb {
  width: 481px;
  height: 9px;
  margin: 0 auto 0 2px;
  background: #9c9c9c;
  border-radius: 5px;
}
.tri-right {
  border-style: solid;
  border-width: 4.5px 0 4.5px 6px;
  border-color: transparent transparent transparent #9c9c9c;
}
.status {
  height: 20px;
  flex: none;
  display: flex;
  align-items: center;
  background: #121212;
  border-top: 1px solid #2a2a2a;
  box-sizing: border-box;
  font-size: 12px;
  color: #ddd;
}
.ready {
  margin-left: 7px;
}
.macro {
  margin-left: 19px;
}
.a11y {
  margin-left: 16px;
}
.a11y-t {
  margin-left: 2px;
}
.views {
  margin-left: auto;
  display: flex;
  margin-right: 5px;
}
.view {
  width: 37.5px;
  height: 19px;
  display: flex;
  align-items: center;
  justify-content: center;
}
.view.on {
  background: #2a2a2a;
}
.zoom {
  display: flex;
  align-items: center;
  gap: 4px;
  color: #ccc;
  font-size: 13px;
}
.track {
  width: 94px;
  height: 1px;
  background: #8a8a8a;
  position: relative;
}
.track i {
  position: absolute;
  left: 46px;
  top: -5px;
  width: 4px;
  height: 11px;
  background: #bbb;
}
.pct100 {
  margin: 0 8px 0 11px;
  font-size: 11px;
}
.taskbar {
  height: 45px;
  flex: none;
  display: flex;
  align-items: center;
  background: linear-gradient(90deg, #181c38 0%, #2c1a58 10%, #391662 16%, #1a2a52 30%, #17244a 38%, #2a1a52 52%, #2a1a58 62%, #221f4e 80%, #1c1f40 100%);
  color: #eee;
  position: relative;
  font-size: 11.5px;
}
.weather {
  width: 353px;
  box-sizing: border-box;
  padding-left: 18px;
  display: flex;
  align-items: center;
  gap: 4px;
  flex: none;
  line-height: 14px;
}
.wd {
  color: #ccc;
}
.winlogo {
  flex: none;
}
.pill {
  margin-left: 13px;
  width: 205px;
  height: 31px;
  border-radius: 16px;
  background: rgba(160, 165, 190, 0.26);
  display: flex;
  align-items: center;
  padding-left: 11px;
  box-sizing: border-box;
  gap: 9px;
  font-size: 13px;
  color: #bbb;
  flex: none;
}
.deco {
  margin-left: auto;
  margin-right: 6px;
}
.tray-apps {
  display: flex;
  margin-left: 1px;
  flex: none;
}
.app-i {
  position: relative;
  width: 41px;
  height: 37px;
  display: flex;
  align-items: center;
  justify-content: center;
}
.app-i.run::after {
  content: '';
  position: absolute;
  left: 18px;
  bottom: 1px;
  width: 5px;
  height: 3px;
  border-radius: 2px;
  background: #aab;
}
.badge {
  position: absolute;
  right: 5px;
  top: 3px;
  width: 15px;
  height: 15px;
  border-radius: 50%;
  background: #a5c5d8;
  color: #123;
  font-style: normal;
  font-size: 10px;
  line-height: 15px;
  text-align: center;
}
.badge.prof {
  background: #48565e;
  color: #ccc;
  font-size: 6px;
  word-spacing: 0;
}
.q {
  font-size: 11px;
  fill: #fff;
  font-weight: 700;
}
.talk {
  font-size: 4.8px;
  font-weight: 700;
  fill: #fee500;
}
.blank {
  width: 37px;
  background: rgba(255, 255, 255, 0.06);
  border-radius: 4px;
  margin-left: 3px;
}
.blank::after {
  content: '';
  position: absolute;
  left: 11px;
  bottom: 1px;
  width: 15px;
  height: 3px;
  border-radius: 2px;
  background: #9fd0ea;
}
.tray {
  margin-left: auto;
  display: flex;
  align-items: center;
  padding-right: 19px;
  flex: none;
}
.ime {
  margin-left: 18px;
}
.wifi {
  margin-left: 15px;
}
.spk {
  margin-left: 8px;
}
.bat {
  margin-left: 9px;
}
.clock {
  margin-left: 12px;
  text-align: right;
  font-size: 11.5px;
  line-height: 15px;
  word-spacing: 0;
}
.notif {
  margin-left: 8px;
  width: 14px;
  height: 14px;
  border-radius: 50%;
  background: #a5d0e6;
  color: #123;
  font-style: normal;
  font-size: 9.5px;
  line-height: 14px;
  text-align: center;
}
</style>
